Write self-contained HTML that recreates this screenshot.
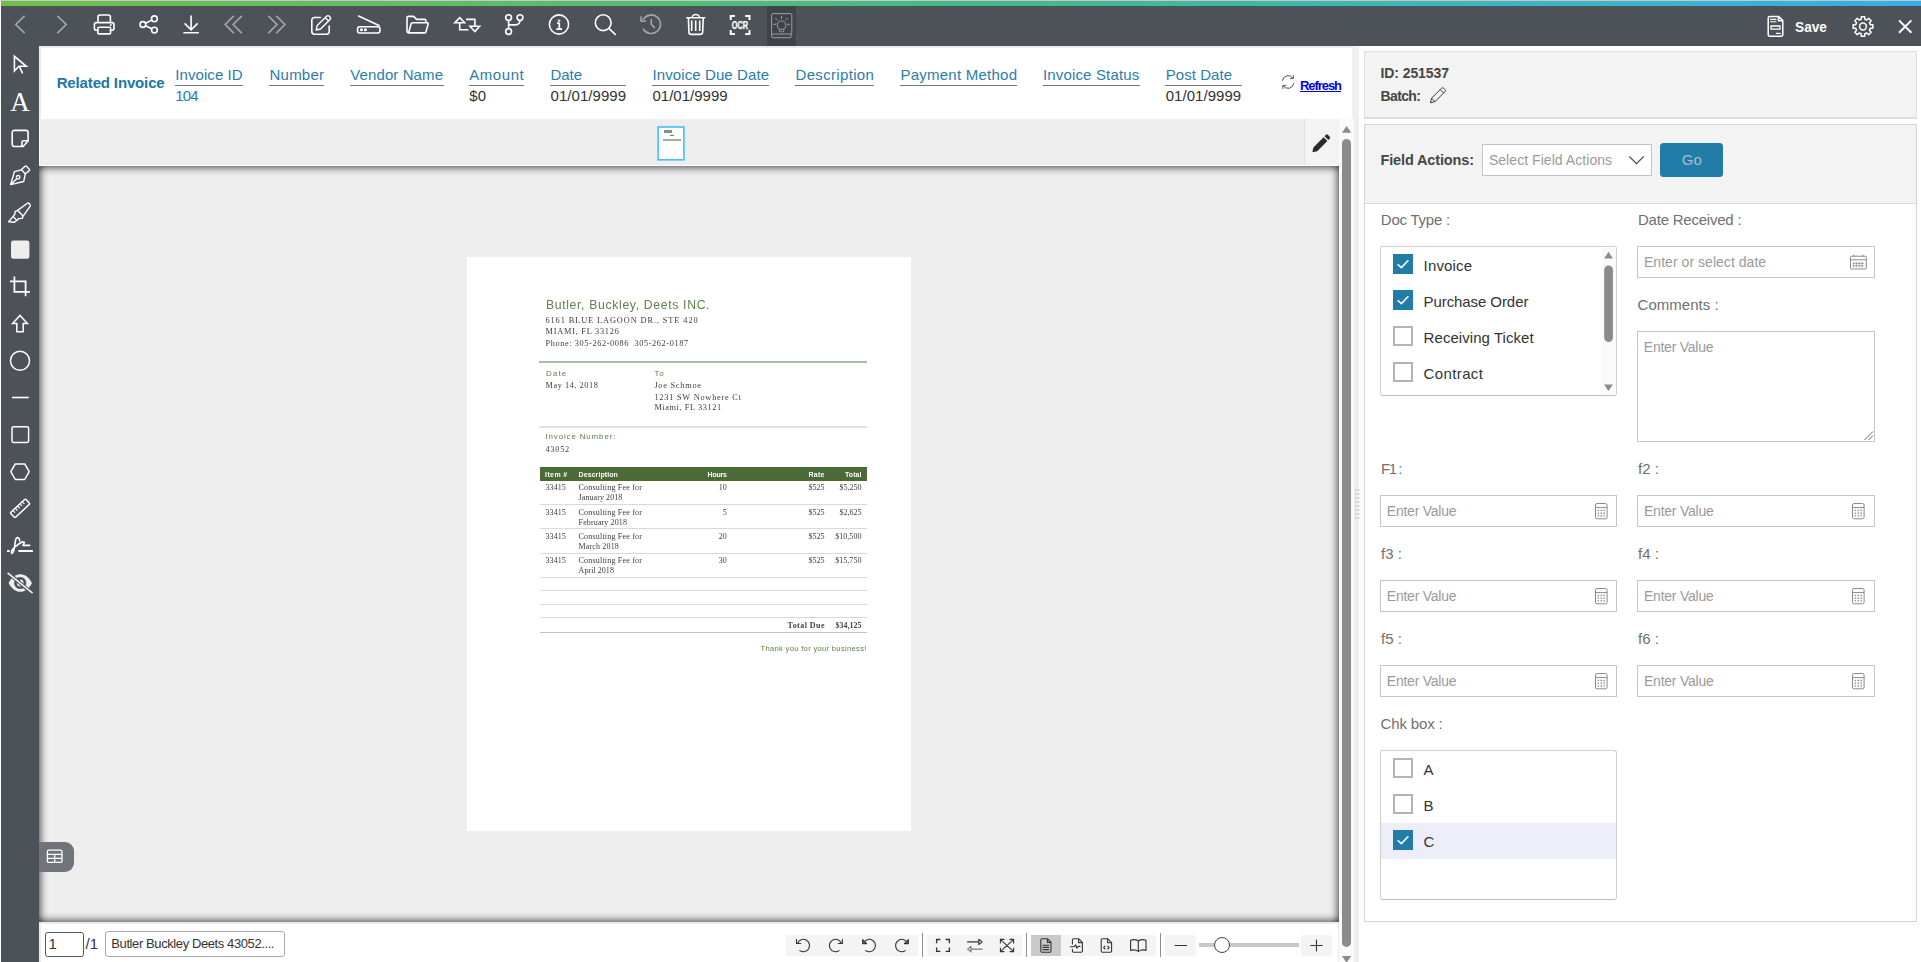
<!DOCTYPE html>
<html lang="en">
<head>
<meta charset="utf-8">
<title>Document Viewer</title>
<style>
*{box-sizing:border-box;margin:0;padding:0}
html,body{width:1921px;height:962px;overflow:hidden;background:#fff}
body{position:relative;font-family:"Liberation Sans",sans-serif;color:#333;font-size:14px}
.abs{position:absolute}
#topline{left:0;top:0;width:1921px;height:1px;background:linear-gradient(90deg,#c9c6d0,#cdc3c4 60%,#cfc3bb)}
#grad{left:1px;top:1px;width:1920px;height:5px;background:linear-gradient(90deg,#70bf4a 0%,#5ebd68 25%,#43ba88 50%,#3bb7b8 74%,#33b0ea 100%)}
#topbar{left:1px;top:6px;width:1920px;height:40px;background:#4d5158}
#side{left:1px;top:46px;width:38px;height:916px;background:#4d5158}
.ic{fill:none;stroke:#fff;stroke-width:1.6;stroke-linecap:round;stroke-linejoin:round}
.dim{stroke:#a3a5a9}
.t{position:absolute;white-space:pre;display:block}
a.t{cursor:pointer}
.doc{filter:blur(0.35px)}

</style>
</head>
<body>
<div id="topline" class="abs"></div>
<div id="grad" class="abs"></div>
<div id="topbar" class="abs"></div>
<div id="side" class="abs"></div>
<svg class="abs" style="left:0;top:0" width="1921" height="46" viewBox="0 0 1921 46">
<rect x="767" y="6" width="29" height="40" fill="#40444a"/>
<g class="ic dim" style="stroke-width:1.7;stroke-linecap:butt;stroke-linejoin:miter">
<path d="M24.6 15.9 L15.8 24.5 L24.6 33.1"/>
<path d="M57.4 15.9 L66.2 24.5 L57.4 33.1"/>
<path d="M233.8 15.9 L225.2 24.5 L233.8 33.1 M241.8 15.9 L233.2 24.5 L241.8 33.1"/>
<path d="M268.3 15.9 L276.9 24.5 L268.3 33.1 M276.3 15.9 L284.9 24.5 L276.3 33.1"/>
</g>
<g class="ic">
<!-- print -->
<path d="M98 22.5 V17 a2 2 0 0 1 2 -2 h8.4 a2 2 0 0 1 2 2 V22.5"/>
<path d="M98.2 30.2 H96.4 a2 2 0 0 1 -2 -2 V24.6 a2 2 0 0 1 2 -2 H112 a2 2 0 0 1 2 2 V28.2 a2 2 0 0 1 -2 2 H110.2"/>
<rect x="97.8" y="27.3" width="12.8" height="6.6" rx="1"/>
<circle cx="110.7" cy="25" r="0.5" style="fill:#fff;stroke-width:1"/>
<!-- share -->
<circle cx="154.4" cy="18.8" r="2.9"/><circle cx="142.9" cy="24.5" r="2.9"/><circle cx="154.4" cy="30.1" r="2.9"/>
<path d="M145.5 23.2 L151.8 20.1 M145.5 25.8 L151.8 28.8"/>
<!-- download -->
<path d="M191.1 15.6 V29.6 M184.6 23.4 L191.1 29.9 L197.7 23.4 M183.4 32.8 H198.9" style="stroke-linecap:butt;stroke-linejoin:miter"/>
<!-- edit -->
<path d="M320.4 17.5 H314.4 a2.6 2.6 0 0 0 -2.6 2.6 V31.6 a2.6 2.6 0 0 0 2.6 2.6 H326.6 a2.6 2.6 0 0 0 2.6 -2.6 V26"/>
<path d="M317.2 25.6 L326.6 16.2 a1.9 1.9 0 0 1 2.7 0 L330 16.9 a1.9 1.9 0 0 1 0 2.7 L320.6 29 L316.2 30 Z M325.2 17.6 L328.6 21" style="stroke-width:1.4"/>
<!-- scanner -->
<path d="M358.6 16.1 L379 25.6"/>
<rect x="357.6" y="26.7" width="22.3" height="6.3" rx="2"/>
<circle cx="361.5" cy="29.8" r="0.7" style="fill:#fff"/><circle cx="365.4" cy="29.8" r="0.7" style="fill:#fff"/>
<!-- folder -->
<path d="M408.6 32.9 H424.6 a1.4 1.4 0 0 0 1.3 -1 L428.2 24 a1 1 0 0 0 -1 -1.3 H412.4 a1.4 1.4 0 0 0 -1.3 1 L408.6 32.9 a1.6 1.6 0 0 1 -1.6 -1.6 V18 a1.6 1.6 0 0 1 1.6 -1.6 H413.6 L416.6 19.4 H424.4 a1.6 1.6 0 0 1 1.6 1.6 V22.5"/>
<!-- transfer -->
<path d="M459.7 17.6 L464.6 22.8 H454.8 Z M459.7 22.8 V29.7 H468.4 M466 19.4 H474.9 V26.3 M470 26.3 H479.6 L474.9 31.5 Z" style="stroke-linejoin:miter;stroke-linecap:butt"/>
<!-- branch -->
<circle cx="508.6" cy="17.6" r="2.9"/><circle cx="520" cy="17.6" r="2.9"/><circle cx="508.6" cy="31.5" r="2.9"/>
<path d="M508.6 20.6 V28.5 M520 20.6 a4.3 4.3 0 0 1 -4.3 4.3 H508.8"/>
<!-- info -->
<circle cx="559" cy="24.5" r="9.6"/>
<path d="M557 23.2 H559.3 V28.9 M556.3 29.1 H562" style="stroke-width:1.7;stroke-linecap:butt"/>
<circle cx="559" cy="20.6" r="0.9" style="fill:#fff;stroke-width:0.6"/>
<!-- search -->
<circle cx="603.2" cy="22.7" r="7.9"/>
<path d="M608.9 28.4 L615.2 34.4"/>
<!-- trash -->
<path d="M686.8 17.7 H704.8 M692.2 17.5 a3.6 3 0 0 1 7.2 0"/>
<path d="M688.4 17.9 L688.9 31.9 a2.5 2.5 0 0 0 2.5 2.5 H700.2 a2.5 2.5 0 0 0 2.5 -2.5 L703.2 17.9"/>
<path d="M691.7 20.6 V31 M695.7 20.6 V31 M699.7 20.6 V31" style="stroke-linecap:butt"/>
<!-- ocr brackets -->
<path d="M730.7 20 V16 H735 M745.2 16 H749.5 V20 M749.5 30 V34 H745.2 M735 34 H730.7 V30" style="stroke-width:2;stroke-linecap:butt;stroke-linejoin:miter"/>
</g>
<text x="739.9" y="29" text-anchor="middle" textLength="16.4" lengthAdjust="spacingAndGlyphs" style="font:bold 10px 'Liberation Sans',sans-serif;fill:#fff;stroke:#fff;stroke-width:0.25">OCR</text>
<!-- history (dim) -->
<g class="ic dim" style="stroke-width:1.6">
<path d="M643.4 29.2 A9.3 9.3 0 1 0 643.2 19.6"/>
<path d="M641 16.2 V21.3 H646.1" style="stroke-linecap:butt"/>
<path d="M651.3 19.5 V24.2 L654.4 27.6"/>
</g>
<!-- lightbulb book -->
<g class="ic" style="stroke:#9b9ea3;stroke-width:1">
<path d="M771.6 34.5 V14.6 a1 1 0 0 1 1 -1 H790.8 a1 1 0 0 1 1 1 V33 a1 1 0 0 1 -1 1 H773.4 a1.8 1.8 0 0 0 0 3.7 H790 a1.2 1.2 0 0 0 1.2 -1.2 V34.2"/>
<path d="M779.2 29 a4.4 4.4 0 1 1 4.6 0 V30.6 a1.2 1.2 0 0 1 -1.2 1.2 H780.4 a1.2 1.2 0 0 1 -1.2 -1.2 Z M779.4 29.2 H783.6"/>
<path d="M781.5 16.4 V18.4 M775.6 18.4 L777.2 20 M787.4 18.4 L785.8 20 M773.4 24.3 H775.6 M787.4 24.3 H789.6"/>
</g>
<!-- save -->
<g class="ic" style="stroke-width:1.5">
<path d="M1778.6 16.4 H1769.8 a1.6 1.6 0 0 0 -1.6 1.6 V34.6 a1.6 1.6 0 0 0 1.6 1.6 H1781.2 a1.6 1.6 0 0 0 1.6 -1.6 V20.6 Z M1778.4 16.6 V20.8 H1782.6"/>
<path d="M1770.6 19.4 H1776 M1770.6 21.8 H1776" style="stroke-width:1.1"/>
<rect x="1771" y="26" width="9" height="3.2" style="stroke-width:1.3"/>
<path d="M1776.4 33.4 H1780.2" style="stroke-width:1.2"/>
</g>
<!-- gear -->
<g class="ic" style="stroke-width:1.5">
<circle cx="1863" cy="26.5" r="3.4"/>
<path d="M1861.14 19.23 L1861.31 16.64 L1864.69 16.64 L1864.86 19.23 L1866.83 20.05 L1868.77 18.33 L1871.17 20.73 L1869.45 22.67 L1870.27 24.64 L1872.86 24.81 L1872.86 28.19 L1870.27 28.36 L1869.45 30.33 L1871.17 32.27 L1868.77 34.67 L1866.83 32.95 L1864.86 33.77 L1864.69 36.36 L1861.31 36.36 L1861.14 33.77 L1859.17 32.95 L1857.23 34.67 L1854.83 32.27 L1856.55 30.33 L1855.73 28.36 L1853.14 28.19 L1853.14 24.81 L1855.73 24.64 L1856.55 22.67 L1854.83 20.73 L1857.23 18.33 L1859.17 20.05 Z"/>
</g>
<!-- close -->
<path class="ic" d="M1899 20.4 L1911.4 32.8 M1911.4 20.4 L1899 32.8" style="stroke-width:2;stroke-linecap:butt"/>
<text x="1795" y="31.8" textLength="32" lengthAdjust="spacingAndGlyphs" style="font:bold 15px 'Liberation Sans',sans-serif;fill:#fff">Save</text>
</svg>

<svg class="abs" style="left:0;top:46px" width="40" height="916" viewBox="0 46 40 916">
<g class="ic" style="stroke-width:1.5">
<!-- cursor -->
<path d="M14.4 56.3 V71 L18.9 66.3 H26.3 Z M19.5 66.9 L22.4 72.9" style="stroke-linejoin:miter;stroke-width:1.6"/>
<!-- sticky note -->
<path d="M23.1 146.5 H14.4 a2.2 2.2 0 0 1 -2.2 -2.2 V132.6 a2.2 2.2 0 0 1 2.2 -2.2 H25.9 a2.2 2.2 0 0 1 2.2 2.2 V141 Z M21.9 145.4 V142.2 a1.4 1.4 0 0 1 1.4 -1.4 H27.2" style="stroke-width:1.6"/>
<!-- pen nib -->
<path d="M10.6 184.6 L14.4 171.7 L21.3 169.8 L25.3 173.8 L23.7 181.5 Z M11 184.2 L16.7 178.7" style="stroke-width:1.4"/>
<circle cx="18.1" cy="177.3" r="1.8" style="stroke-width:1.3"/>
<path d="M21.3 169.8 L25 166.3 a1 1 0 0 1 1.400 0 L29.300 169.200 a1 1 0 0 1 0 1.400 L25.300 173.800" style="stroke-width:1.4"/>
<!-- highlighter -->
<path d="M17.600 210.400 L27.400 203.300 a1.400 1.400 0 0 1 1.700 0.100 L30 204.600 a1.400 1.400 0 0 1 0.200 1.600 L22.800 216.600 L22.400 218.300 L18.800 218.600 L14.600 222.200 L8.600 221.700 L13.200 216.400 L15 213.900 V211.700 Z M18 210.800 L22.600 215.600 M13.200 216.400 L16 219.600" style="stroke-width:1.4"/>
<!-- crop -->
<path d="M14.4 276.6 V291.9 H30 M10 281.3 H25.6 V296.2" style="stroke-width:1.8;stroke-linecap:butt;stroke-linejoin:miter"/>
<!-- up arrow -->
<path d="M20 315.4 L27.4 323.6 H23.2 V331.8 H16.8 V323.6 H12.6 Z" style="stroke-linejoin:miter"/>
<!-- circle -->
<circle cx="20" cy="360.7" r="9.5"/>
<!-- line -->
<path d="M12 397.5 H28.7" style="stroke-linecap:butt;stroke-width:1.6"/>
<!-- square -->
<rect x="12" y="426.7" width="16.6" height="15.7" rx="1.6"/>
<!-- hexagon -->
<path d="M10.8 471.7 L15.3 463.9 H24.7 L29.2 471.7 L24.7 479.5 H15.3 Z"/>
<!-- ruler -->
<g transform="rotate(-43 20.1 508.3)">
<rect x="9.700" y="504.900" width="20.800" height="6.800" rx="1.400" style="stroke-width:1.5"/>
<path d="M13.400 505.200 V508 M16.600 505.200 V508 M19.800 505.200 V508 M23 505.200 V508 M26.200 505.200 V508" style="stroke-width:1.2;stroke-linecap:butt"/>
</g>
<!-- signature -->
<path d="M18.400 551 H32.900" style="stroke-width:2;stroke-linecap:butt"/><path d="M19.600 541 C19.800 538 17.600 536.800 16.300 538.200 C14.900 539.800 15.200 545 14 549.600 C13.300 552.600 12 554.200 11.400 553 C10.600 551.400 13.600 547.600 17.600 544.800 L22.400 541.800 L24.400 542.200 L23 545.400 H29.600" style="stroke-width:1.6"/>
<path d="M7.100 551 H9.600" style="stroke-width:2;stroke-linecap:butt"/>
</g>
<!-- filled square -->
<rect x="11" y="240.6" width="18.4" height="18.2" rx="2.4" fill="#eeeeee"/>
<!-- eye slash -->
<path d="M8.600 583 C12 576 17 574.200 20.200 574.200 C24 574.200 28.600 576 32 583 C28.600 590 24 591.800 20.200 591.800 C17 591.800 12 590 8.600 583 Z M20.200 577 a6 6 0 1 0 0.010 0 Z M20.200 579.600 a3.400 3.400 0 0 1 0.010 6.800 a3.400 3.400 0 0 1 -3.400 -3.400 c1.600 0.600 3.400 -0.600 3.390 -3.400 Z" fill="#eeeeee" fill-rule="evenodd"/>
<path d="M6.600 571.600 L33.400 594.400" stroke="#4d5158" stroke-width="3.8" fill="none"/>
<path d="M7.600 572.800 L32.600 593.200" stroke="#eeeeee" stroke-width="1.700" fill="none"/>
</svg>
<span class="abs" style="left:10px;top:87px;width:20px;text-align:center;font:27px/31px 'Liberation Serif',serif;color:#fff">A</span>

<div class="abs" style="left:39px;top:46px;width:1313px;height:73px;background:#ececec"></div>
<div class="abs" style="left:41px;top:47.5px;width:1311px;height:71.5px;background:#fff"></div>
<div class="abs" style="left:175.0px;top:84.5px;width:68.1px;height:1px;background:#777"></div><div class="abs" style="left:269.2px;top:84.5px;width:55.3px;height:1px;background:#777"></div><div class="abs" style="left:350.0px;top:84.5px;width:93.5px;height:1px;background:#777"></div><div class="abs" style="left:468.9px;top:84.5px;width:55.4px;height:1px;background:#777"></div><div class="abs" style="left:550.2px;top:84.5px;width:76.3px;height:1px;background:#777"></div><div class="abs" style="left:652.2px;top:84.5px;width:117.3px;height:1px;background:#777"></div><div class="abs" style="left:795.2px;top:84.5px;width:79.1px;height:1px;background:#777"></div><div class="abs" style="left:900.2px;top:84.5px;width:117.3px;height:1px;background:#777"></div><div class="abs" style="left:1042.7px;top:84.5px;width:97.0px;height:1px;background:#777"></div><div class="abs" style="left:1165.4px;top:84.5px;width:76.3px;height:1px;background:#777"></div>
<span class="t" style='left:56.70px;top:74px;font:bold 15px "Liberation Sans",sans-serif;color:#2077a6;letter-spacing:-0.146px;'>Related Invoice</span>
<span class="t" style='left:175.30px;top:66px;font:normal 15px "Liberation Sans",sans-serif;color:#2a7dab;letter-spacing:0.066px;'>Invoice ID</span>
<span class="t" style='left:175.30px;top:87px;font:normal 15px "Liberation Sans",sans-serif;color:#2a7dab;letter-spacing:-0.916px;'>104</span>
<span class="t" style='left:269.50px;top:66px;font:normal 15px "Liberation Sans",sans-serif;color:#2a7dab;letter-spacing:0.228px;'>Number</span>
<span class="t" style='left:350.30px;top:66px;font:normal 15px "Liberation Sans",sans-serif;color:#2a7dab;letter-spacing:0.097px;'>Vendor Name</span>
<span class="t" style='left:469.20px;top:66px;font:normal 15px "Liberation Sans",sans-serif;color:#2a7dab;letter-spacing:0.579px;'>Amount</span>
<span class="t" style='left:469.20px;top:87px;font:normal 15px "Liberation Sans",sans-serif;color:#333;letter-spacing:0.312px;'>$0</span>
<span class="t" style='left:550.50px;top:66px;font:normal 15px "Liberation Sans",sans-serif;color:#2a7dab;letter-spacing:-0.062px;'>Date</span>
<span class="t" style='left:550.50px;top:87px;font:normal 15px "Liberation Sans",sans-serif;color:#333;letter-spacing:0.047px;'>01/01/9999</span>
<span class="t" style='left:652.50px;top:66px;font:normal 15px "Liberation Sans",sans-serif;color:#2a7dab;letter-spacing:0.095px;'>Invoice Due Date</span>
<span class="t" style='left:652.50px;top:87px;font:normal 15px "Liberation Sans",sans-serif;color:#333;'>01/01/9999</span>
<span class="t" style='left:795.50px;top:66px;font:normal 15px "Liberation Sans",sans-serif;color:#2a7dab;letter-spacing:0.327px;'>Description</span>
<span class="t" style='left:900.50px;top:66px;font:normal 15px "Liberation Sans",sans-serif;color:#2a7dab;letter-spacing:0.238px;'>Payment Method</span>
<span class="t" style='left:1043.00px;top:66px;font:normal 15px "Liberation Sans",sans-serif;color:#2a7dab;letter-spacing:0.152px;'>Invoice Status</span>
<span class="t" style='left:1165.70px;top:66px;font:normal 15px "Liberation Sans",sans-serif;color:#2a7dab;letter-spacing:0.053px;'>Post Date</span>
<span class="t" style='left:1165.70px;top:87px;font:normal 15px "Liberation Sans",sans-serif;color:#333;letter-spacing:0.047px;'>01/01/9999</span>
<a class="t" style='left:1300.00px;top:78px;font:bold 13px "Liberation Sans",sans-serif;color:#0000ee;letter-spacing:-1.070px;text-decoration:underline;text-underline-offset:1px;'>Refresh</a>
<svg class="abs" style="left:1279px;top:73px" width="18" height="18" viewBox="1279 73 18 18"><g fill="none" stroke="#555" stroke-width="1" stroke-linecap="round" stroke-linejoin="round">
<path d="M1282.4 80.4 a5.9 5.9 0 0 1 10.6 -2.300 M1293.800 83.600 a5.900 5.900 0 0 1 -10.600 2.300"/>
<path d="M1293.400 75.400 V78.400 H1290.400 M1282.800 88.600 V85.600 H1285.800"/></g></svg>

<div class="abs" style="left:39px;top:118.5px;width:1300px;height:47.5px;background:#fff"></div>
<div class="abs" style="left:40px;top:119px;width:1299px;height:46px;background:#eeeeee"></div>
<svg class="abs" style="left:656px;top:125px" width="30" height="37" viewBox="656 125 30 37"><rect x="658.1" y="127" width="25.8" height="32.800" fill="#fff" stroke="#40bfff" stroke-width="1.600"/></svg>
<div class="abs" style="left:664px;top:130.4px;width:8px;height:2.6px;background:#8a8d86;filter:blur(0.5px)"></div>
<div class="abs" style="left:669.5px;top:134.8px;width:4.4px;height:1.6px;background:#777;filter:blur(0.5px)"></div>
<div class="abs" style="left:663.2px;top:139.2px;width:17.4px;height:1.4px;background:#9fb392;filter:blur(0.4px)"></div>
<div class="abs" style="left:1304px;top:119px;width:35px;height:46px;background:#f3f3f3;border-left:1px solid #e2e2e2"></div>
<svg class="abs" style="left:1310px;top:132px" width="22" height="22" viewBox="1310 132 22 22"><path d="M1312.400 152.200 L1313.400 147.400 L1323.600 137.200 L1327.400 141 L1317.200 151.200 Z M1324.600 136.200 L1326 134.800 a1.300 1.300 0 0 1 1.800 0 L1329.800 136.800 a1.300 1.300 0 0 1 0 1.800 L1328.400 140 Z" fill="#2b2b2b"/></svg>

<div id="viewer" class="abs" style="left:39px;top:166px;width:1300px;height:756px;background:#eeeeee;box-shadow:inset 0 0 10px rgba(0,0,0,0.92)"></div>
<div id="page" class="abs" style="left:467px;top:257px;width:444px;height:574px;background:#fff"></div>
<div class="abs" style="left:539.9px;top:467px;width:327.1px;height:13.8px;background:#4a6a36"></div>
<div class="abs" style="left:539.2px;top:360.6px;width:327.8px;height:2px;background:#a9c09c"></div><div class="abs" style="left:539.2px;top:426.1px;width:327.8px;height:1.5px;background:#dde3da"></div><div class="abs" style="left:539.9px;top:504.0px;width:327.1px;height:1px;background:#d9d9d5"></div><div class="abs" style="left:539.9px;top:528.0px;width:327.1px;height:1px;background:#d9d9d5"></div><div class="abs" style="left:539.9px;top:553.0px;width:327.1px;height:1px;background:#d9d9d5"></div><div class="abs" style="left:539.9px;top:577.0px;width:327.1px;height:1px;background:#d9d9d5"></div><div class="abs" style="left:539.9px;top:590.0px;width:327.1px;height:1px;background:#d9d9d5"></div><div class="abs" style="left:539.9px;top:604.0px;width:327.1px;height:1px;background:#d9d9d5"></div><div class="abs" style="left:539.9px;top:617.0px;width:327.1px;height:1px;background:#d9d9d5"></div><div class="abs" style="left:539.9px;top:632.0px;width:327.1px;height:1px;background:#b7caab"></div>
<div class="doc">
<span class="t" style='left:545.90px;top:298px;font:normal 12.2px "Liberation Sans",sans-serif;color:#5f8049;letter-spacing:0.674px;'>Butler, Buckley, Deets INC.</span>
<span class="t" style='left:545.50px;top:316px;font:normal 8.3px "Liberation Serif",serif;color:#3c3c3c;letter-spacing:0.913px;'>6161 BLUE LAGOON DR., STE 420</span>
<span class="t" style='left:545.50px;top:327px;font:normal 8.3px "Liberation Serif",serif;color:#3c3c3c;letter-spacing:0.762px;'>MIAMI, FL 33126</span>
<span class="t" style='left:545.50px;top:339px;font:normal 8.3px "Liberation Serif",serif;color:#3c3c3c;letter-spacing:0.603px;'>Phone: 305-262-0086  305-262-0187</span>
<span class="t" style='left:545.90px;top:369px;font:normal 8px "Liberation Sans",sans-serif;color:#5f8049;letter-spacing:1.131px;'>Date</span>
<span class="t" style='left:654.60px;top:369px;font:normal 8px "Liberation Sans",sans-serif;color:#5f8049;letter-spacing:0.747px;'>To</span>
<span class="t" style='left:545.50px;top:381px;font:normal 8.3px "Liberation Serif",serif;color:#3c3c3c;letter-spacing:0.543px;'>May 14, 2018</span>
<span class="t" style='left:654.40px;top:381px;font:normal 8.3px "Liberation Serif",serif;color:#3c3c3c;letter-spacing:0.747px;'>Joe Schmoe</span>
<span class="t" style='left:654.40px;top:393px;font:normal 8.3px "Liberation Serif",serif;color:#3c3c3c;letter-spacing:0.779px;'>1231 SW Nowhere Ct</span>
<span class="t" style='left:654.40px;top:403px;font:normal 8.3px "Liberation Serif",serif;color:#3c3c3c;letter-spacing:0.595px;'>Miami, FL 33121</span>
<span class="t" style='left:545.50px;top:432px;font:normal 8px "Liberation Sans",sans-serif;color:#5f8049;letter-spacing:0.832px;'>Invoice Number:</span>
<span class="t" style='left:545.50px;top:445px;font:normal 8.3px "Liberation Serif",serif;color:#3c3c3c;letter-spacing:0.737px;'>43052</span>
<span class="t" style='left:545.10px;top:471px;font:bold 7px "Liberation Sans",sans-serif;color:#fff;letter-spacing:0.373px;'>Item #</span>
<span class="t" style='left:578.60px;top:471px;font:bold 7px "Liberation Sans",sans-serif;color:#fff;letter-spacing:0.068px;'>Description</span>
<span class="t" style='left:707.60px;top:471px;font:bold 7px "Liberation Sans",sans-serif;color:#fff;letter-spacing:-0.259px;'>Hours</span>
<span class="t" style='left:808.50px;top:471px;font:bold 7px "Liberation Sans",sans-serif;color:#fff;letter-spacing:0.271px;'>Rate</span>
<span class="t" style='left:845.00px;top:471px;font:bold 7px "Liberation Sans",sans-serif;color:#fff;letter-spacing:0.049px;'>Total</span>
<span class="t" style='left:545.50px;top:483px;font:normal 8px "Liberation Serif",serif;color:#3c3c3c;letter-spacing:0.075px;'>33415</span>
<span class="t" style='left:578.60px;top:483px;font:normal 8px "Liberation Serif",serif;color:#3c3c3c;letter-spacing:0.194px;'>Consulting Fee for</span>
<span class="t" style='left:578.60px;top:493px;font:normal 8px "Liberation Serif",serif;color:#3c3c3c;letter-spacing:0.074px;'>January 2018</span>
<span class="t" style='left:718.80px;top:483px;font:normal 8px "Liberation Serif",serif;color:#3c3c3c;'>10</span>
<span class="t" style='left:808.50px;top:483px;font:normal 8px "Liberation Serif",serif;color:#3c3c3c;'>$525</span>
<span class="t" style='left:839.60px;top:483px;font:normal 8px "Liberation Serif",serif;color:#3c3c3c;letter-spacing:-0.040px;'>$5,250</span>
<span class="t" style='left:545.50px;top:508px;font:normal 8px "Liberation Serif",serif;color:#3c3c3c;letter-spacing:0.075px;'>33415</span>
<span class="t" style='left:578.60px;top:508px;font:normal 8px "Liberation Serif",serif;color:#3c3c3c;letter-spacing:0.194px;'>Consulting Fee for</span>
<span class="t" style='left:578.60px;top:518px;font:normal 8px "Liberation Serif",serif;color:#3c3c3c;letter-spacing:0.126px;'>February 2018</span>
<span class="t" style='left:722.80px;top:508px;font:normal 8px "Liberation Serif",serif;color:#3c3c3c;'>5</span>
<span class="t" style='left:808.50px;top:508px;font:normal 8px "Liberation Serif",serif;color:#3c3c3c;'>$525</span>
<span class="t" style='left:839.60px;top:508px;font:normal 8px "Liberation Serif",serif;color:#3c3c3c;letter-spacing:-0.040px;'>$2,625</span>
<span class="t" style='left:545.50px;top:532px;font:normal 8px "Liberation Serif",serif;color:#3c3c3c;letter-spacing:0.075px;'>33415</span>
<span class="t" style='left:578.60px;top:532px;font:normal 8px "Liberation Serif",serif;color:#3c3c3c;letter-spacing:0.194px;'>Consulting Fee for</span>
<span class="t" style='left:578.60px;top:542px;font:normal 8px "Liberation Serif",serif;color:#3c3c3c;letter-spacing:0.145px;'>March 2018</span>
<span class="t" style='left:718.80px;top:532px;font:normal 8px "Liberation Serif",serif;color:#3c3c3c;'>20</span>
<span class="t" style='left:808.50px;top:532px;font:normal 8px "Liberation Serif",serif;color:#3c3c3c;'>$525</span>
<span class="t" style='left:835.30px;top:532px;font:normal 8px "Liberation Serif",serif;color:#3c3c3c;letter-spacing:0.017px;'>$10,500</span>
<span class="t" style='left:545.50px;top:556px;font:normal 8px "Liberation Serif",serif;color:#3c3c3c;letter-spacing:0.075px;'>33415</span>
<span class="t" style='left:578.60px;top:556px;font:normal 8px "Liberation Serif",serif;color:#3c3c3c;letter-spacing:0.194px;'>Consulting Fee for</span>
<span class="t" style='left:578.60px;top:566px;font:normal 8px "Liberation Serif",serif;color:#3c3c3c;letter-spacing:0.045px;'>April 2018</span>
<span class="t" style='left:718.80px;top:556px;font:normal 8px "Liberation Serif",serif;color:#3c3c3c;'>30</span>
<span class="t" style='left:808.50px;top:556px;font:normal 8px "Liberation Serif",serif;color:#3c3c3c;'>$525</span>
<span class="t" style='left:835.30px;top:556px;font:normal 8px "Liberation Serif",serif;color:#3c3c3c;letter-spacing:0.017px;'>$15,750</span>
<span class="t" style='left:787.60px;top:621px;font:bold 8px "Liberation Serif",serif;color:#444;letter-spacing:0.454px;'>Total Due</span>
<span class="t" style='left:835.50px;top:621px;font:bold 8px "Liberation Serif",serif;color:#444;letter-spacing:-0.017px;'>$34,125</span>
<span class="t" style='left:760.50px;top:644px;font:normal 7.6px "Liberation Sans",sans-serif;color:#5f8049;letter-spacing:0.311px;'>Thank you for your business!</span>
</div>
<div class="abs" style="left:39px;top:842px;width:35px;height:30px;background:#70747a;border-radius:0 9px 9px 0"></div>
<svg class="abs" style="left:45px;top:847px" width="20" height="18" viewBox="45 847 20 18"><g fill="none" stroke="#fff" stroke-width="1.3" stroke-linejoin="round">
<rect x="47.4" y="850.2" width="14.6" height="12.2" rx="1.2"/><path d="M47.4 854.4 H62 M47.4 858.4 H62 M54.7 854.4 V862.4"/></g></svg>

<div class="abs" style="left:39px;top:922px;width:1300px;height:40px;background:#ececec"></div>
<div class="abs" style="left:41px;top:923.5px;width:1296.5px;height:38.5px;background:#fff"></div>
<div class="abs" style="left:45.2px;top:932px;width:38.6px;height:24.6px;border:1px solid #555;border-radius:2.5px;background:#fff"></div>
<div class="abs" style="left:105.2px;top:931.4px;width:179.8px;height:25.2px;border:1px solid #a9a9a9;border-radius:3px;background:#fff"></div>
<span class="t" style='left:48.60px;top:935px;font:normal 15px "Liberation Sans",sans-serif;color:#333;'>1</span>
<span class="t" style='left:85.60px;top:935px;font:normal 15px "Liberation Sans",sans-serif;color:#333;'>/1</span>
<span class="t" style='left:111.30px;top:936px;font:normal 13px "Liberation Sans",sans-serif;color:#333;letter-spacing:-0.403px;'>Butler Buckley Deets 43052....</span>
<div class="abs" style="left:786px;top:935px;width:132px;height:21px;background:#f4f4f4"></div>
<div class="abs" style="left:927px;top:935px;width:95px;height:21px;background:#f4f4f4"></div>
<div class="abs" style="left:1031px;top:935px;width:125px;height:21px;background:#f4f4f4"></div>
<div class="abs" style="left:1031px;top:935px;width:30px;height:21px;background:#c9c9c9"></div>
<div class="abs" style="left:1165px;top:935px;width:31px;height:21px;background:#f4f4f4"></div>
<div class="abs" style="left:1301px;top:935px;width:31px;height:21px;background:#f4f4f4"></div>
<div class="abs" style="left:922px;top:933px;width:1px;height:24px;background:#8f8f8f"></div>
<div class="abs" style="left:1026px;top:933px;width:1px;height:24px;background:#8f8f8f"></div>
<div class="abs" style="left:1160px;top:933px;width:1px;height:24px;background:#8f8f8f"></div>
<div class="abs" style="left:1199.300px;top:943.300px;width:99.500px;height:3.600px;background:#c8c8c8"></div>
<div class="abs" style="left:1213.800px;top:937px;width:16px;height:16px;border:1.600px solid #444;border-radius:50%;background:#fff"></div>
<svg class="abs" style="left:780px;top:930px" width="560" height="32" viewBox="780 930 560 32"><g fill="none" stroke="#333" stroke-width="1.100" stroke-linecap="round" stroke-linejoin="round">
<!-- undo1 -->
<path d="M797.600 943.200 A6.200 6.200 0 1 1 799.800 950.600 M796.500 939.400 V943.500 H800.600"/>
<!-- redo1 -->
<path d="M841.300 943.200 A6.200 6.200 0 1 0 839.100 950.600 M842.400 939.400 V943.500 H838.300"/>
<!-- undo2 -->
<path d="M863.500 943.200 A6.200 6.200 0 1 1 865.700 950.600"/><path d="M862.600 939.600 V943.600 H866.600 Z" fill="#777"/>
<!-- redo2 -->
<path d="M907.500 943.200 A6.200 6.200 0 1 0 905.300 950.600"/><path d="M908.400 939.600 V943.600 H904.400 Z" fill="#777"/>
<!-- fullscreen -->
<path d="M936.600 943.200 V939.500 H940.400 M945.600 939.500 H949.400 V943.200 M949.400 947.600 V951.300 H945.600 M940.400 951.300 H936.600 V947.600" style="stroke-width:1.300;stroke-linecap:butt;stroke-linejoin:miter"/>
<!-- swap -->
<path d="M967.600 941.900 H978.800 M978.800 939.200 L982.200 941.900 L978.800 944.600 Z"/><path d="M982.200 949.100 H971 M971 946.400 L967.600 949.100 L971 951.800 Z" stroke="#777"/>
<!-- expand -->
<path d="M1000.600 939.600 L1013.400 951.400 M1013.400 939.600 L1000.600 951.400 M1000.400 943 V939.400 H1004 M1010 939.400 H1013.600 V943 M1013.600 948 V951.600 H1010 M1004 951.600 H1000.400 V948"/>
<!-- doc1 -->
<path d="M1047.600 938.800 H1042 a1.200 1.200 0 0 0 -1.200 1.200 V951 a1.200 1.200 0 0 0 1.200 1.200 H1049.800 a1.200 1.200 0 0 0 1.200 -1.200 V942.200 Z M1047.400 939 V942.400 H1050.800 M1043 945.200 H1048.800 M1043 947.400 H1048.800 M1043 949.600 H1048.800"/>
<!-- doc2 pulse -->
<path d="M1072.400 944 V940 a1.200 1.200 0 0 1 1.200 -1.200 H1078.800 L1082.400 942.400 V951 a1.200 1.200 0 0 1 -1.200 1.200 H1073.600 a1.200 1.200 0 0 1 -1.200 -1.200 V949.400 M1078.600 939 V942.600 H1082.200 M1070.400 946.800 H1074.400 L1075.600 944.800 L1077 948.200 L1078.200 946.400 H1080"/>
<!-- doc3 code -->
<path d="M1107.800 938.800 H1102.400 a1.200 1.200 0 0 0 -1.200 1.200 V951 a1.200 1.200 0 0 0 1.200 1.200 H1110.400 a1.200 1.200 0 0 0 1.200 -1.200 V942.600 Z M1107.600 939 V942.800 H1111.400 M1105 946.200 L1103.600 947.600 L1105 949 M1107.800 946.200 L1109.200 947.600 L1107.800 949"/>
<!-- book -->
<path d="M1138.300 941 C1136 939.400 1133 939.400 1130.600 940.200 V950.400 C1133 949.600 1136 949.800 1138.300 951.400 C1140.600 949.800 1143.600 949.600 1146 950.400 V940.200 C1143.600 939.400 1140.600 939.400 1138.300 941 Z M1138.300 941 V951.400"/>
<!-- minus / plus -->
<path d="M1174.600 945.500 H1187 M1310.400 945.500 H1322.600 M1316.500 939.400 V951.600" style="stroke-linecap:butt"/>
</g></svg>

<!-- SCROLL -->
<div class="abs" style="left:1339px;top:119px;width:15px;height:843px;background:#fafafa"></div>
<div class="abs" style="left:1352px;top:46px;width:7px;height:73px;background:#f0f0f0"></div>
<div class="abs" style="left:1354px;top:119px;width:5px;height:843px;background:#eeeeee"></div>
<svg class="abs" style="left:1339px;top:119px" width="21" height="843" viewBox="1339 119 21 843">
<path d="M1346.600 126 L1351.200 132.800 H1342 Z M1346.600 962.800 L1351.200 956 H1342 Z" fill="#8b8b8b"/>
<rect x="1342" y="139" width="9" height="807.900" rx="4.500" fill="#8b8b8b"/>
<g fill="#c2c2c2"><rect x="1355" y="489.2" width="1.500" height="1.600"/><rect x="1357.800" y="489.2" width="1.500" height="1.600"/><rect x="1355" y="493.2" width="1.500" height="1.600"/><rect x="1357.800" y="493.2" width="1.500" height="1.600"/><rect x="1355" y="497.2" width="1.500" height="1.600"/><rect x="1357.800" y="497.2" width="1.500" height="1.600"/><rect x="1355" y="501.2" width="1.500" height="1.600"/><rect x="1357.800" y="501.2" width="1.500" height="1.600"/><rect x="1355" y="505.2" width="1.500" height="1.600"/><rect x="1357.800" y="505.2" width="1.500" height="1.600"/><rect x="1355" y="509.2" width="1.500" height="1.600"/><rect x="1357.800" y="509.2" width="1.500" height="1.600"/><rect x="1355" y="513.2" width="1.500" height="1.600"/><rect x="1357.800" y="513.2" width="1.500" height="1.600"/><rect x="1355" y="517.2" width="1.500" height="1.600"/><rect x="1357.800" y="517.2" width="1.500" height="1.600"/></g>
</svg>
<div class="abs" style="left:1364px;top:51px;width:553px;height:68px;background:#f3f3f3;border:1px solid #dedede;border-bottom:2px solid #dcdcdc"></div>
<div class="abs" style="left:1364px;top:124px;width:553px;height:798px;background:#fff;border:1px solid #d4d4d4"></div>
<div class="abs" style="left:1365px;top:125px;width:551px;height:79px;background:#f3f3f3;border-bottom:1px solid #dcdcdc"></div>
<svg class="abs" style="left:1428px;top:85px" width="20" height="20" viewBox="1428 85 20 20"><g fill="none" stroke="#3a3a3a" stroke-width="1" stroke-linejoin="round">
<path d="M1430.400 102.800 L1431.600 98.200 L1441.600 88.200 a1.500 1.500 0 0 1 2.100 0 L1445 89.500 a1.500 1.500 0 0 1 0 2.100 L1435 101.600 Z M1440.200 89.600 L1443.600 93 M1431.600 98.200 L1435 101.600"/></g></svg>
<div class="abs" style="left:1482px;top:144px;width:170px;height:32px;border:1px solid #c2c2c2;background:#fff"></div>
<svg class="abs" style="left:1626px;top:152px" width="22" height="16" viewBox="1626 152 22 16"><path d="M1629.200 156.400 L1636.500 163.600 L1643.800 156.400" fill="none" stroke="#444" stroke-width="1.200"/></svg>
<div class="abs" style="left:1660px;top:143px;width:63px;height:34px;background:#217ca8;border-radius:3.500px"></div>
<div class="abs" style="left:1380px;top:246px;width:237px;height:150px;border:1px solid #cfcfcf;border-bottom-color:#bdbdbd;border-radius:3px;background:#fff"></div>
<div class="abs" style="left:1602px;top:247px;width:14px;height:148px;background:#fafafa"></div>
<svg class="abs" style="left:1601px;top:247px" width="16" height="148" viewBox="1601 247 16 148">
<path d="M1608.500 251.800 L1612.900 258.600 H1604.100 Z M1608.500 391 L1612.900 384.600 H1604.100 Z" fill="#8b8b8b"/>
<rect x="1604.200" y="265.400" width="8.700" height="76.500" rx="4.300" fill="#8b8b8b"/></svg>
<div class="abs" style="left:1637px;top:246px;width:238px;height:32px;border:1px solid #c6c6c6;background:#fff"></div>
<svg class="abs" style="left:1849px;top:253px" width="20" height="18" viewBox="1849 253 20 18"><g fill="none" stroke="#8a8a8a" stroke-width="1">
<rect x="1850.500" y="256.200" width="15.800" height="12.800" rx="1"/><path d="M1850.500 259.800 H1866.300 M1853.800 254.600 V257 M1863 254.600 V257"/>
<path d="M1853.600 262 V267.400 M1856.400 262 V267.400 M1859.200 262 V267.400 M1862 262 V267.400 M1852.600 263.400 H1864.200 M1852.600 265.800 H1864.200" stroke-width="0.700"/></g></svg>
<div class="abs" style="left:1637px;top:331px;width:238px;height:111px;border:1px solid #c6c6c6;background:#fff"></div>
<svg class="abs" style="left:1862px;top:429px" width="12" height="12" viewBox="0 0 12 12"><path d="M2.500 11 L11 2.500 M6.500 11 L11 6.500" stroke="#555" stroke-width="0.900" fill="none"/></svg>
<div class="abs" style="left:1380px;top:495px;width:237px;height:32px;border:1px solid #c6c6c6;background:#fff"></div><div class="abs" style="left:1637px;top:495px;width:238px;height:32px;border:1px solid #c6c6c6;background:#fff"></div><svg class="abs" style="left:1594.1px;top:501.9px" width="15" height="19" viewBox="-1 -1 15 19"><g fill="none" stroke="#8a8a8a" stroke-width="1"><rect x="0.5" y="0.5" width="11.6" height="15.3" rx="1.6"/><path d="M0.5 4.6 H12.1" /></g><g fill="#8a8a8a"><rect x="2.6" y="6.8" width="1.5" height="1.3"/><rect x="5.5" y="6.8" width="1.5" height="1.3"/><rect x="8.4" y="6.8" width="1.5" height="1.3"/><rect x="2.6" y="9.5" width="1.5" height="1.3"/><rect x="5.5" y="9.5" width="1.5" height="1.3"/><rect x="8.4" y="9.5" width="1.5" height="1.3"/><rect x="2.6" y="12.2" width="1.5" height="1.3"/><rect x="5.5" y="12.2" width="1.5" height="1.3"/><rect x="8.4" y="12.2" width="1.5" height="1.3"/></g></svg><svg class="abs" style="left:1851.2px;top:501.9px" width="15" height="19" viewBox="-1 -1 15 19"><g fill="none" stroke="#8a8a8a" stroke-width="1"><rect x="0.5" y="0.5" width="11.6" height="15.3" rx="1.6"/><path d="M0.5 4.6 H12.1" /></g><g fill="#8a8a8a"><rect x="2.6" y="6.8" width="1.5" height="1.3"/><rect x="5.5" y="6.8" width="1.5" height="1.3"/><rect x="8.4" y="6.8" width="1.5" height="1.3"/><rect x="2.6" y="9.5" width="1.5" height="1.3"/><rect x="5.5" y="9.5" width="1.5" height="1.3"/><rect x="8.4" y="9.5" width="1.5" height="1.3"/><rect x="2.6" y="12.2" width="1.5" height="1.3"/><rect x="5.5" y="12.2" width="1.5" height="1.3"/><rect x="8.4" y="12.2" width="1.5" height="1.3"/></g></svg><div class="abs" style="left:1380px;top:580px;width:237px;height:32px;border:1px solid #c6c6c6;background:#fff"></div><div class="abs" style="left:1637px;top:580px;width:238px;height:32px;border:1px solid #c6c6c6;background:#fff"></div><svg class="abs" style="left:1594.1px;top:586.9px" width="15" height="19" viewBox="-1 -1 15 19"><g fill="none" stroke="#8a8a8a" stroke-width="1"><rect x="0.5" y="0.5" width="11.6" height="15.3" rx="1.6"/><path d="M0.5 4.6 H12.1" /></g><g fill="#8a8a8a"><rect x="2.6" y="6.8" width="1.5" height="1.3"/><rect x="5.5" y="6.8" width="1.5" height="1.3"/><rect x="8.4" y="6.8" width="1.5" height="1.3"/><rect x="2.6" y="9.5" width="1.5" height="1.3"/><rect x="5.5" y="9.5" width="1.5" height="1.3"/><rect x="8.4" y="9.5" width="1.5" height="1.3"/><rect x="2.6" y="12.2" width="1.5" height="1.3"/><rect x="5.5" y="12.2" width="1.5" height="1.3"/><rect x="8.4" y="12.2" width="1.5" height="1.3"/></g></svg><svg class="abs" style="left:1851.2px;top:586.9px" width="15" height="19" viewBox="-1 -1 15 19"><g fill="none" stroke="#8a8a8a" stroke-width="1"><rect x="0.5" y="0.5" width="11.6" height="15.3" rx="1.6"/><path d="M0.5 4.6 H12.1" /></g><g fill="#8a8a8a"><rect x="2.6" y="6.8" width="1.5" height="1.3"/><rect x="5.5" y="6.8" width="1.5" height="1.3"/><rect x="8.4" y="6.8" width="1.5" height="1.3"/><rect x="2.6" y="9.5" width="1.5" height="1.3"/><rect x="5.5" y="9.5" width="1.5" height="1.3"/><rect x="8.4" y="9.5" width="1.5" height="1.3"/><rect x="2.6" y="12.2" width="1.5" height="1.3"/><rect x="5.5" y="12.2" width="1.5" height="1.3"/><rect x="8.4" y="12.2" width="1.5" height="1.3"/></g></svg><div class="abs" style="left:1380px;top:665px;width:237px;height:32px;border:1px solid #c6c6c6;background:#fff"></div><div class="abs" style="left:1637px;top:665px;width:238px;height:32px;border:1px solid #c6c6c6;background:#fff"></div><svg class="abs" style="left:1594.1px;top:671.9px" width="15" height="19" viewBox="-1 -1 15 19"><g fill="none" stroke="#8a8a8a" stroke-width="1"><rect x="0.5" y="0.5" width="11.6" height="15.3" rx="1.6"/><path d="M0.5 4.6 H12.1" /></g><g fill="#8a8a8a"><rect x="2.6" y="6.8" width="1.5" height="1.3"/><rect x="5.5" y="6.8" width="1.5" height="1.3"/><rect x="8.4" y="6.8" width="1.5" height="1.3"/><rect x="2.6" y="9.5" width="1.5" height="1.3"/><rect x="5.5" y="9.5" width="1.5" height="1.3"/><rect x="8.4" y="9.5" width="1.5" height="1.3"/><rect x="2.6" y="12.2" width="1.5" height="1.3"/><rect x="5.5" y="12.2" width="1.5" height="1.3"/><rect x="8.4" y="12.2" width="1.5" height="1.3"/></g></svg><svg class="abs" style="left:1851.2px;top:671.9px" width="15" height="19" viewBox="-1 -1 15 19"><g fill="none" stroke="#8a8a8a" stroke-width="1"><rect x="0.5" y="0.5" width="11.6" height="15.3" rx="1.6"/><path d="M0.5 4.6 H12.1" /></g><g fill="#8a8a8a"><rect x="2.6" y="6.8" width="1.5" height="1.3"/><rect x="5.5" y="6.8" width="1.5" height="1.3"/><rect x="8.4" y="6.8" width="1.5" height="1.3"/><rect x="2.6" y="9.5" width="1.5" height="1.3"/><rect x="5.5" y="9.5" width="1.5" height="1.3"/><rect x="8.4" y="9.5" width="1.5" height="1.3"/><rect x="2.6" y="12.2" width="1.5" height="1.3"/><rect x="5.5" y="12.2" width="1.5" height="1.3"/><rect x="8.4" y="12.2" width="1.5" height="1.3"/></g></svg>
<div class="abs" style="left:1380px;top:750px;width:237px;height:150px;border:1px solid #cfcfcf;border-bottom-color:#bdbdbd;border-radius:3px;background:#fff"></div>
<div class="abs" style="left:1381px;top:823px;width:235px;height:36px;background:#eeeefa"></div>
<div class="abs" style="left:1393px;top:254px;width:20px;height:20px;background:#217ca8"></div><svg class="abs" style="left:1393px;top:254px" width="20" height="20" viewBox="0 0 20 20"><path d="M4.600 10.200 L8.400 13.600 L15.400 6.200" fill="none" stroke="#fff" stroke-width="1.500"/></svg><div class="abs" style="left:1393px;top:290px;width:20px;height:20px;background:#217ca8"></div><svg class="abs" style="left:1393px;top:290px" width="20" height="20" viewBox="0 0 20 20"><path d="M4.600 10.200 L8.400 13.600 L15.400 6.200" fill="none" stroke="#fff" stroke-width="1.500"/></svg><div class="abs" style="left:1393px;top:326px;width:20px;height:20px;border:2px solid #b4b4b4;background:#fff"></div><div class="abs" style="left:1393px;top:362px;width:20px;height:20px;border:2px solid #b4b4b4;background:#fff"></div><div class="abs" style="left:1393px;top:758px;width:20px;height:20px;border:2px solid #b4b4b4;background:#fff"></div><div class="abs" style="left:1393px;top:794px;width:20px;height:20px;border:2px solid #b4b4b4;background:#fff"></div><div class="abs" style="left:1393px;top:830px;width:20px;height:20px;background:#217ca8"></div><svg class="abs" style="left:1393px;top:830px" width="20" height="20" viewBox="0 0 20 20"><path d="M4.600 10.200 L8.400 13.600 L15.400 6.200" fill="none" stroke="#fff" stroke-width="1.500"/></svg>
<span class="t" style='left:1380.50px;top:65px;font:bold 14px "Liberation Sans",sans-serif;color:#464646;letter-spacing:-0.087px;'>ID: 251537</span>
<span class="t" style='left:1380.50px;top:88px;font:bold 14px "Liberation Sans",sans-serif;color:#464646;letter-spacing:-0.633px;'>Batch:</span>
<span class="t" style='left:1380.50px;top:152px;font:bold 14.5px "Liberation Sans",sans-serif;color:#464646;letter-spacing:-0.141px;'>Field Actions:</span>
<span class="t" style='left:1488.90px;top:152px;font:normal 14px "Liberation Sans",sans-serif;color:#9a9a9a;letter-spacing:0.054px;'>Select Field Actions</span>
<span class="t" style='left:1681.80px;top:151px;font:normal 15px "Liberation Sans",sans-serif;color:#a7bfce;letter-spacing:-0.016px;'>Go</span>
<span class="t" style='left:1380.80px;top:211px;font:normal 15px "Liberation Sans",sans-serif;color:#707070;letter-spacing:-0.238px;'>Doc Type :</span>
<span class="t" style='left:1638.00px;top:211px;font:normal 15px "Liberation Sans",sans-serif;color:#707070;letter-spacing:-0.224px;'>Date Received :</span>
<span class="t" style='left:1644.00px;top:254px;font:normal 14px "Liberation Sans",sans-serif;color:#9a9a9a;letter-spacing:0.037px;'>Enter or select date</span>
<span class="t" style='left:1637.60px;top:296px;font:normal 15px "Liberation Sans",sans-serif;color:#707070;letter-spacing:0.027px;'>Comments :</span>
<span class="t" style='left:1643.80px;top:339px;font:normal 14px "Liberation Sans",sans-serif;color:#9a9a9a;letter-spacing:-0.233px;'>Enter Value</span>
<span class="t" style='left:1423.60px;top:257px;font:normal 15px "Liberation Sans",sans-serif;color:#333;letter-spacing:0.161px;'>Invoice</span>
<span class="t" style='left:1423.60px;top:293px;font:normal 15px "Liberation Sans",sans-serif;color:#333;letter-spacing:-0.084px;'>Purchase Order</span>
<span class="t" style='left:1423.60px;top:329px;font:normal 15px "Liberation Sans",sans-serif;color:#333;letter-spacing:0.059px;'>Receiving Ticket</span>
<span class="t" style='left:1423.60px;top:365px;font:normal 15px "Liberation Sans",sans-serif;color:#333;letter-spacing:0.371px;'>Contract</span>
<span class="t" style='left:1381.00px;top:460px;font:normal 15px "Liberation Sans",sans-serif;color:#707070;letter-spacing:-1.448px;'>F1 :</span>
<span class="t" style='left:1638.00px;top:460px;font:normal 15px "Liberation Sans",sans-serif;color:#707070;'>f2 :</span>
<span class="t" style='left:1386.80px;top:503px;font:normal 14px "Liberation Sans",sans-serif;color:#9a9a9a;letter-spacing:-0.233px;'>Enter Value</span>
<span class="t" style='left:1644.00px;top:503px;font:normal 14px "Liberation Sans",sans-serif;color:#9a9a9a;letter-spacing:-0.233px;'>Enter Value</span>
<span class="t" style='left:1381.00px;top:545px;font:normal 15px "Liberation Sans",sans-serif;color:#707070;'>f3 :</span>
<span class="t" style='left:1638.00px;top:545px;font:normal 15px "Liberation Sans",sans-serif;color:#707070;'>f4 :</span>
<span class="t" style='left:1386.80px;top:588px;font:normal 14px "Liberation Sans",sans-serif;color:#9a9a9a;letter-spacing:-0.233px;'>Enter Value</span>
<span class="t" style='left:1644.00px;top:588px;font:normal 14px "Liberation Sans",sans-serif;color:#9a9a9a;letter-spacing:-0.233px;'>Enter Value</span>
<span class="t" style='left:1381.00px;top:630px;font:normal 15px "Liberation Sans",sans-serif;color:#707070;'>f5 :</span>
<span class="t" style='left:1638.00px;top:630px;font:normal 15px "Liberation Sans",sans-serif;color:#707070;'>f6 :</span>
<span class="t" style='left:1386.80px;top:673px;font:normal 14px "Liberation Sans",sans-serif;color:#9a9a9a;letter-spacing:-0.233px;'>Enter Value</span>
<span class="t" style='left:1644.00px;top:673px;font:normal 14px "Liberation Sans",sans-serif;color:#9a9a9a;letter-spacing:-0.233px;'>Enter Value</span>
<span class="t" style='left:1380.60px;top:715px;font:normal 15px "Liberation Sans",sans-serif;color:#707070;letter-spacing:-0.159px;'>Chk box :</span>
<span class="t" style='left:1423.50px;top:761px;font:normal 15px "Liberation Sans",sans-serif;color:#333;'>A</span>
<span class="t" style='left:1423.50px;top:797px;font:normal 15px "Liberation Sans",sans-serif;color:#333;'>B</span>
<span class="t" style='left:1423.50px;top:833px;font:normal 15px "Liberation Sans",sans-serif;color:#333;'>C</span>

</body>
</html>
